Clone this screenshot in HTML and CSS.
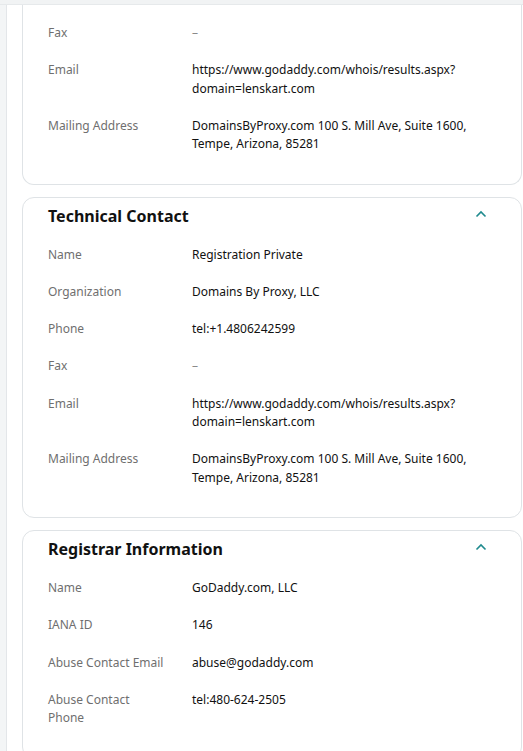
FILE: index.html
```html
<!DOCTYPE html>
<html lang="en">
<head>
<meta charset="utf-8">
<title>Whois</title>
<link rel="stylesheet" href="styles.css">
</head>
<body>
<div class="topbar"></div>
<div class="layout">
  <div class="rail"></div>
  <main class="main">
    <section class="card card-clipped">
      <div class="rows">
        <div class="row"><div class="label">Fax</div><div class="value dash">–</div></div>
        <div class="row"><div class="label">Email</div><div class="value">https://www.godaddy.com/whois/results.aspx?<wbr>domain=lenskart.com</div></div>
        <div class="row"><div class="label">Mailing Address</div><div class="value">DomainsByProxy.com 100 S. Mill Ave, Suite 1600, Tempe, Arizona, 85281</div></div>
      </div>
    </section>

    <section class="card">
      <header class="card-head">
        <h2 class="card-title">Technical Contact</h2>
        <svg class="chev" width="12" height="8" viewBox="0 0 12 8"><polyline points="1.5,6.5 6,2 10.5,6.5" fill="none" stroke="#1f8a8e" stroke-width="1.6"/></svg>
      </header>
      <div class="rows">
        <div class="row"><div class="label">Name</div><div class="value">Registration Private</div></div>
        <div class="row"><div class="label">Organization</div><div class="value">Domains By Proxy, LLC</div></div>
        <div class="row"><div class="label">Phone</div><div class="value">tel:+1.4806242599</div></div>
        <div class="row"><div class="label">Fax</div><div class="value dash">–</div></div>
        <div class="row"><div class="label">Email</div><div class="value">https://www.godaddy.com/whois/results.aspx?<wbr>domain=lenskart.com</div></div>
        <div class="row"><div class="label">Mailing Address</div><div class="value">DomainsByProxy.com 100 S. Mill Ave, Suite 1600, Tempe, Arizona, 85281</div></div>
      </div>
    </section>

    <section class="card">
      <header class="card-head">
        <h2 class="card-title">Registrar Information</h2>
        <svg class="chev" width="12" height="8" viewBox="0 0 12 8"><polyline points="1.5,6.5 6,2 10.5,6.5" fill="none" stroke="#1f8a8e" stroke-width="1.6"/></svg>
      </header>
      <div class="rows">
        <div class="row"><div class="label">Name</div><div class="value">GoDaddy.com, LLC</div></div>
        <div class="row"><div class="label">IANA ID</div><div class="value">146</div></div>
        <div class="row"><div class="label">Abuse Contact Email</div><div class="value">abuse@godaddy.com</div></div>
        <div class="row"><div class="label">Abuse Contact Phone</div><div class="value">tel:480-624-2505</div></div>
      </div>
    </section>
  </main>
</div>
</body>
</html>
```

FILE: styles.css
```css
* { box-sizing: border-box; }
html, body { margin: 0; padding: 0; }
body {
  font-family: "Noto Sans", "Liberation Sans", sans-serif;
  color: #111111;
  background: #ffffff;
  overflow: hidden;
}
.topbar {
  height: 5px;
  background: #f1f3f4;
  border-bottom: 1px solid #e6e9eb;
}
.layout {
  display: flex;
  min-height: 760px;
}
.rail {
  width: 7px;
  flex: none;
  background: #f3f5f6;
  border-right: 1px solid #e3e6e9;
}
.main {
  flex: 1;
  padding: 0 0 0 15px;
  display: flex;
  flex-direction: column;
  gap: 12px;
}
.card {
  width: 500px;
  border: 1px solid #dfe3e6;
  border-radius: 12px;
  padding: 0 26px 11px 25px;
}
.card-clipped {
  border-top: none;
  border-top-left-radius: 0;
  border-top-right-radius: 0;
  padding-top: 18.75px;
}
.card-head {
  display: flex;
  align-items: center;
  justify-content: space-between;
  padding: 6px 8px 0 0;
  margin-bottom: 18px;
}
.card-title {
  margin: 0;
  font-size: 16px;
  line-height: 24px;
  font-weight: 700;
  color: #111111;
}
.chev { display: block; margin-top: -4px; }
.row {
  display: grid;
  grid-template-columns: 120px 1fr;
  column-gap: 24px;
  padding-bottom: 18.75px;
  font-size: 12px;
  line-height: 18.5px;
}
.label { color: #6f6f6f; }
.value { color: #111111; padding-right: 20px; }
.dash { color: #8a8a8a; }
```
